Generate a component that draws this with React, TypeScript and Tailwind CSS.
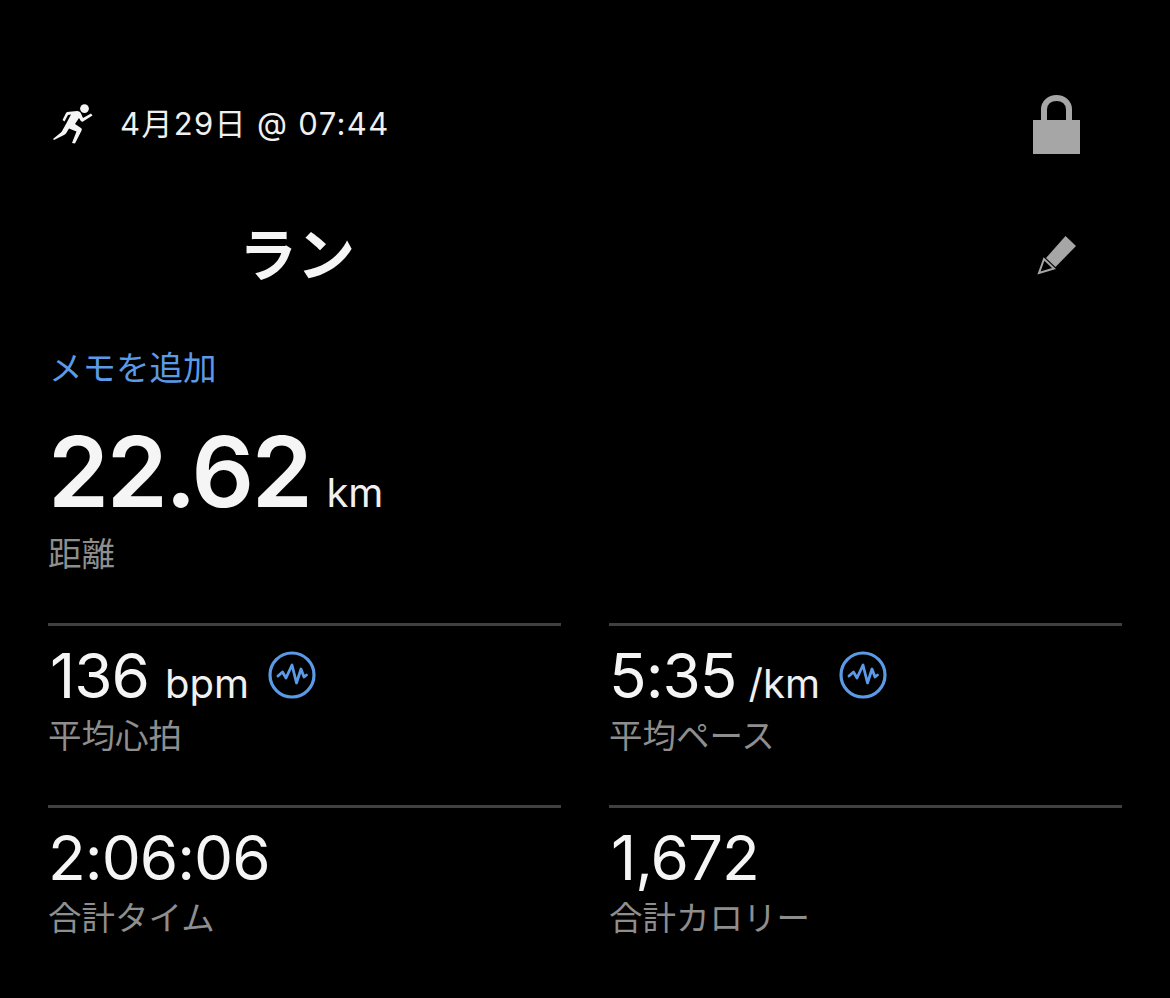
const font = { fontFamily: 'Inter, "Noto Sans CJK JP", sans-serif' };

function Runner() {
  return (
    <svg width="40" height="40" viewBox="0 0 40 40" fill="#f5f5f5">
      <circle cx="31.5" cy="4.6" r="4.4" />
      <path d="M14 8 L24 7 C26 7 27.5 8 28 9.5 L30 14 L38 9.5 L39.5 11.5 L30 17.5 C29 18 28 17.5 27.5 16.5 L26 14 L22 20 L28 24 C28.8 24.6 29 25.5 28.6 26.5 L22 39.5 L19 39 L23.5 27.5 L16 24.5 L13 29.5 C12.5 30 12 30.5 11 31 L1 36 L0 35 L8.5 28 L13 20 L18 10.5 L15 11 L11.5 17.5 L9.5 16 L13 9 Z" />
    </svg>
  );
}

function Lock() {
  return (
    <svg width="47" height="60" viewBox="0 0 47 60" fill="none">
      <path d="M11 28 V15.5 C11 8.5 16.5 4 23.5 4 C30.5 4 36 8.5 36 15.5 V28" stroke="#a6a6a6" strokeWidth="6" />
      <rect x="0" y="26" width="47" height="34" fill="#a6a6a6" />
    </svg>
  );
}

function Pencil() {
  return (
    <svg width="40" height="40" viewBox="0 0 40 40">
      <path d="M28.5 1 L39 11 L18.5 32 L9 23 Z" fill="#a6a6a6" />
      <path d="M7 24 L17 33.5 L2 38 Z" fill="none" stroke="#a6a6a6" strokeWidth="2" strokeLinejoin="miter" />
    </svg>
  );
}

function Pulse() {
  return (
    <svg width="48" height="48" viewBox="0 0 48 48" fill="none" stroke="#5b9ae6">
      <circle cx="24" cy="24" r="22" strokeWidth="3.2" />
      <path d="M10 25 L14.5 21 L18 27 L24 14 L28.5 32 L33 18 L36 26 L38.5 24" strokeWidth="2.8" strokeLinejoin="round" strokeLinecap="round" />
    </svg>
  );
}

function Stat({ value, unit, label, pulse, one }: { value: string; unit?: string; label: string; pulse?: boolean; one?: boolean }) {
  return (
    <div className="border-t-[3px] border-[#404040] h-[182px]">
      <div className="flex items-center h-[99px]">
        <div className={one ? "flex items-baseline pl-[2px]" : "flex items-baseline"}>
          <span className="text-[62px] leading-[99px] text-[#f5f5f5] tracking-[-1px]">{value}</span>
          {unit && <span className={one ? "text-[40px] text-[#f0f0f0] ml-[16px]" : "text-[40px] text-[#f0f0f0] ml-[12px]"}>{unit}</span>}
        </div>
        {pulse && <div className="ml-[19px] -mt-[2px]"><Pulse /></div>}
      </div>
      <div className="text-[33.5px] leading-[22px] text-[#8e8e8e]">{label}</div>
    </div>
  );
}

export default function App() {
  return (
    <div className="w-[1170px] h-[998px] bg-black px-[48px] pt-[94px] overflow-hidden" style={font}>
      <div className="flex justify-between items-start h-[61px]">
        <div className="flex items-center h-[60px] pl-[5px]">
          <Runner />
          <span className="ml-[27px] text-[31px] text-[#f0f0f0] tracking-[1.35px]">4月29日 @ 07:44</span>
        </div>
        <div className="mr-[42px]"><Lock /></div>
      </div>
      <div className="flex justify-between items-center mt-[70px] h-[60px]">
        <div className="pl-[191px] text-[58px] font-bold text-[#f5f5f5]">ラン</div>
        <div className="mr-[45px]"><Pencil /></div>
      </div>
      <div className="mt-[63px] text-[33.5px] leading-[40px] pl-[1px] text-[#5b9ae6]">メモを追加</div>
      <div className="flex items-baseline mt-[22px] h-[124px]">
        <span className="text-[98px] leading-[124px] font-semibold text-[#f5f5f5] tracking-[-2.4px]">22.62</span>
        <span className="text-[40px] text-[#f0f0f0] ml-[16px]">km</span>
      </div>
      <div className="text-[33.5px] leading-[40px] text-[#8e8e8e]">距離</div>
      <div className="grid grid-cols-2 gap-x-[48px] mt-[49px]">
        <Stat value="136" unit="bpm" label="平均心拍" pulse one />
        <Stat value="5:35" unit="/km" label="平均ペース" pulse />
        <Stat value="2:06:06" label="合計タイム" />
        <Stat value="1,672" label="合計カロリー" one />
      </div>
    </div>
  );
}
